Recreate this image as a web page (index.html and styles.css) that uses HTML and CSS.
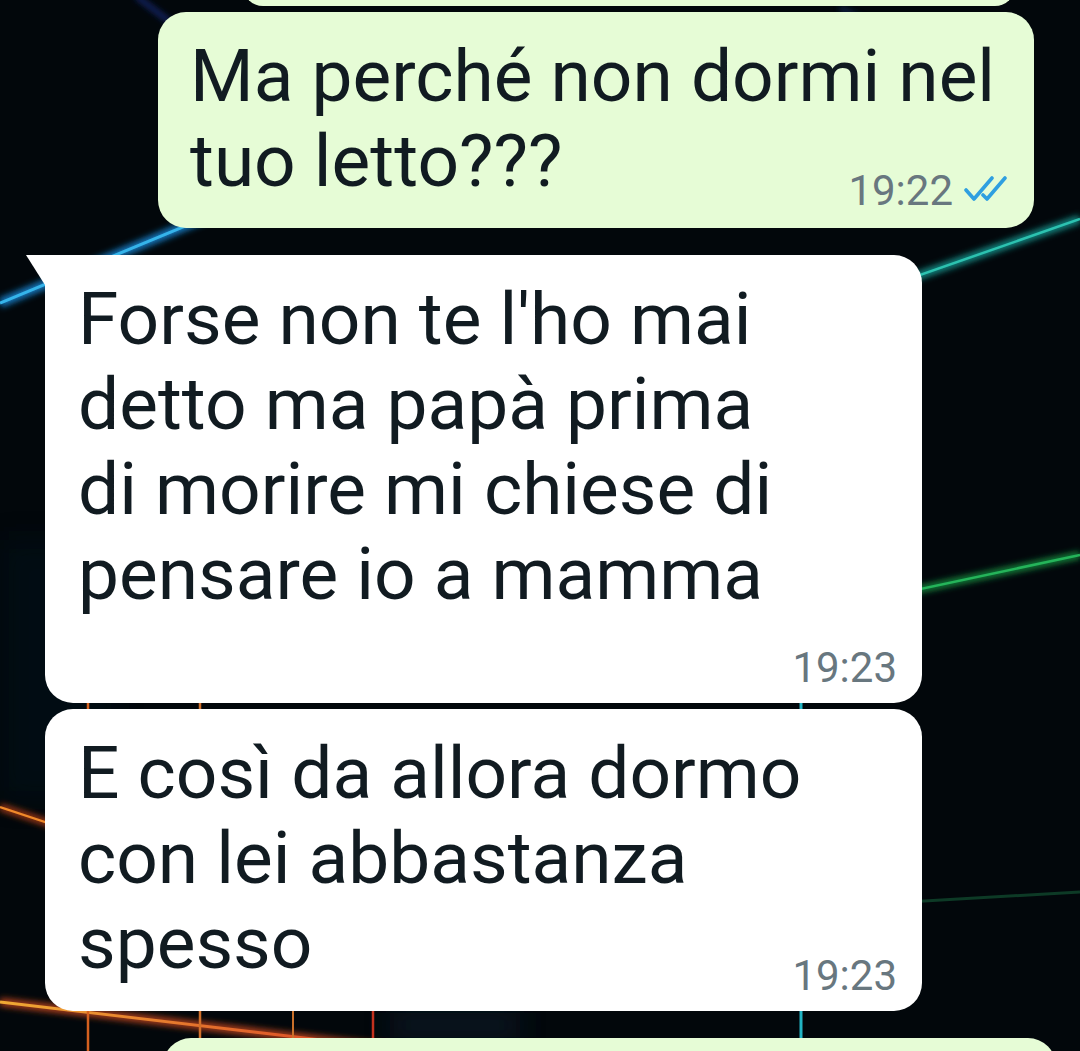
FILE: index.html
```html
<!DOCTYPE html>
<html lang="it">
<head>
<meta charset="utf-8">
<title>Chat</title>
<link rel="stylesheet" href="styles.css">
</head>
<body>
<div class="screen">
  <svg class="wallpaper" width="1080" height="1051" viewBox="0 0 1080 1051" xmlns="http://www.w3.org/2000/svg">
    <defs>
      <filter id="glow" x="-20%" y="-50%" width="140%" height="200%">
        <feGaussianBlur stdDeviation="3"/>
      </filter>
      <filter id="soft" x="-20%" y="-50%" width="140%" height="200%">
        <feGaussianBlur stdDeviation="14"/>
      </filter>
      <linearGradient id="orange" x1="0" y1="0" x2="1" y2="0">
        <stop offset="0" stop-color="#f0aa34"/>
        <stop offset="0.6" stop-color="#e0602a"/>
        <stop offset="1" stop-color="#d02a20"/>
      </linearGradient>
    </defs>
    <rect width="1080" height="1051" fill="#02070b"/>
    <rect x="0" y="540" width="120" height="260" fill="#061222" opacity="0.35" filter="url(#soft)"/>
    <rect x="390" y="1012" width="130" height="26" fill="#0a2436" opacity="0.6" filter="url(#soft)"/>
    <!-- faint navy at top -->
    <line x1="136" y1="-4" x2="170" y2="22" stroke="#1c2f86" stroke-width="4" filter="url(#glow)"/>
    <line x1="840" y1="8" x2="880" y2="30" stroke="#12306a" stroke-width="5" opacity="0.7" filter="url(#glow)"/>
    <!-- blue line left -->
    <line x1="0" y1="303" x2="260" y2="195" stroke="#1679c0" stroke-width="9" filter="url(#glow)"/>
    <line x1="0" y1="303" x2="260" y2="195" stroke="#35b4ea" stroke-width="3"/>
    <!-- teal right -->
    <line x1="700" y1="352" x2="1080" y2="219" stroke="#138c86" stroke-width="8" filter="url(#glow)"/>
    <line x1="700" y1="352" x2="1080" y2="219" stroke="#2cc2b0" stroke-width="2.5"/>
    <!-- green right -->
    <line x1="700" y1="636" x2="1080" y2="555" stroke="#13893c" stroke-width="7" filter="url(#glow)"/>
    <line x1="700" y1="636" x2="1080" y2="555" stroke="#25b45a" stroke-width="2.5"/>
    <!-- faint green -->
    <line x1="700" y1="914" x2="1080" y2="892" stroke="#0d3a26" stroke-width="3"/>
    <!-- orange left -->
    <line x1="0" y1="807" x2="120" y2="847" stroke="#a63a12" stroke-width="7" filter="url(#glow)"/>
    <line x1="0" y1="807" x2="120" y2="847" stroke="#f08a2a" stroke-width="2.2"/>
    <!-- bottom orange -->
    <line x1="0" y1="1002" x2="440" y2="1054" stroke="#b0401a" stroke-width="8" filter="url(#glow)"/>
    <line x1="0" y1="1002" x2="440" y2="1054" stroke="url(#orange)" stroke-width="2.8"/>
    <!-- verticals -->
    <line x1="88" y1="690" x2="88" y2="1051" stroke="#d4601f" stroke-width="2.5"/>
    <line x1="200" y1="690" x2="200" y2="1051" stroke="#d2702a" stroke-width="2.5"/>
    <line x1="293" y1="990" x2="293" y2="1051" stroke="#c9702a" stroke-width="2"/>
    <line x1="373" y1="990" x2="373" y2="1051" stroke="#c4321e" stroke-width="2.5"/>
    <line x1="801" y1="690" x2="801" y2="1051" stroke="#22b4c4" stroke-width="3"/>
  </svg>

  <div class="chat">
    <div class="bubble out prev"></div>

    <div class="bubble out">
      <p class="msg">Ma perché non dormi nel<br>tuo letto???</p>
      <div class="meta meta-out">
        <span class="time">19:22</span>
        <svg class="ticks" width="44" height="26" viewBox="0 0 44 26" xmlns="http://www.w3.org/2000/svg">
          <path d="M2 14 L10 23 L28 2" fill="none" stroke="#2f9fe0" stroke-width="3.6" stroke-linecap="round" stroke-linejoin="round"/>
          <path d="M19 19 L23 23 L41 2" fill="none" stroke="#2f9fe0" stroke-width="3.6" stroke-linecap="round" stroke-linejoin="round"/>
        </svg>
      </div>
    </div>

    <div class="bubble in first">
      <p class="msg">Forse non te l'ho mai<br>detto ma papà prima<br>di morire mi chiese di<br>pensare io a mamma</p>
      <div class="meta meta-below"><span class="time">19:23</span></div>
    </div>

    <div class="bubble in second">
      <p class="msg">E così da allora dormo<br>con lei abbastanza<br>spesso</p>
      <div class="meta meta-inline"><span class="time">19:23</span></div>
    </div>

    <div class="bubble out next"></div>
  </div>
</div>
</body>
</html>
```
FILE: styles.css
```css
html, body {
  margin: 0;
  padding: 0;
  background: #02070b;
}

.screen {
  position: relative;
  width: 1080px;
  height: 1051px;
  overflow: hidden;
  font-family: Roboto, "Noto Sans", "Liberation Sans", sans-serif;
  color: #111b21;
}

.wallpaper {
  position: absolute;
  left: 0;
  top: 0;
  z-index: 0;
}

.chat {
  position: relative;
  z-index: 1;
  display: flex;
  flex-direction: column;
  align-items: flex-start;
}

.bubble {
  position: relative;
  box-sizing: border-box;
  border-radius: 28px;
  display: flex;
  flex-direction: column;
}

.out {
  background: #e6fcd6;
  margin-left: 158px;
  width: 876px;
  padding: 22px 26px 16px 32px;
  margin-top: 6px;
}

.prev {
  margin-top: -34px;
  margin-left: 243px;
  width: 772px;
  height: 40px;
  padding: 0;
}

.next {
  margin-top: 27px;
  margin-left: 163px;
  width: 893px;
  height: 60px;
  padding: 0;
}

.in {
  background: #ffffff;
  margin-left: 45px;
  width: 877px;
  padding: 22px 25px 14px 33px;
}

.first {
  margin-top: 27px;
  border-top-left-radius: 0;
}

.first::before {
  content: "";
  position: absolute;
  left: -19px;
  top: 0;
  width: 0;
  height: 0;
  border-top: 30px solid #ffffff;
  border-left: 19px solid transparent;
}

.second {
  margin-top: 6px;
}

.msg {
  margin: 0;
  font-size: 73px;
  line-height: 85px;
  font-weight: 400;
  white-space: nowrap;
}

.meta {
  display: flex;
  justify-content: flex-end;
  align-items: center;
  gap: 11px;
  height: 42px;
}

.meta-out {
  margin-top: -34px;
}

.meta-below {
  margin-top: 30px;
}

.meta-inline {
  margin-top: -31px;
}

.time {
  font-size: 42px;
  line-height: 42px;
  color: #68777f;
}

.ticks {
  display: block;
  margin-top: -4px;
}
```
